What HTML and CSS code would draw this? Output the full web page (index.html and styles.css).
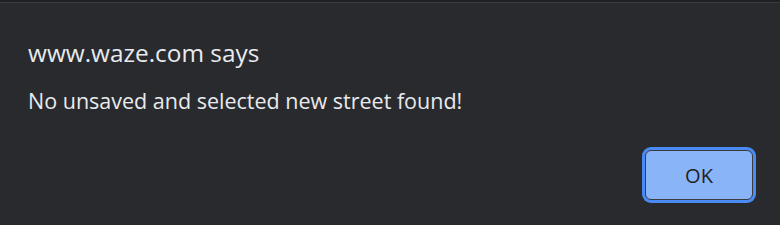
FILE: index.html
```html
<!DOCTYPE html>
<html lang="en">
<head>
    <meta charset="UTF-8">
    <title>www.waze.com says</title>
    <link rel="stylesheet" href="styles.css">
</head>
<body>
    <!-- Dialogo de alerta -->
    <div class="dialog">
        <h1 class="title">www.waze.com says</h1>
        <p class="message">No unsaved and selected new street found!</p>
        <div class="actions">
            <button class="ok">OK</button>
        </div>
    </div>
</body>
</html>
```

FILE: styles.css
```css
html, body { margin: 0; padding: 0; height: 100%; background: #292a2d; }
body { font-family: "Open Sans", "Noto Sans", sans-serif; color: #e8eaed; }
.dialog { box-sizing: border-box; height: 225px; border-top: 2px solid #1f2023; box-shadow: inset 0 1px 0 #3a3b3e; padding: 36px 27px 0 28px; display: flex; flex-direction: column; }
.title { margin: 0; font-size: 24.4px; font-weight: normal; line-height: 30px; }
.message { margin: 18px 0 0; font-size: 21.5px; line-height: 30px; }
.actions { display: flex; justify-content: flex-end; margin-top: 34px; }
.ok { width: 108px; height: 50px; box-sizing: border-box; background: #8ab4f8; color: #202124; font-family: inherit; font-size: 20px; border: 1px solid #3c3c3c; border-radius: 6px; box-shadow: 0 0 0 3px #4a8af4; padding: 0; }
```
